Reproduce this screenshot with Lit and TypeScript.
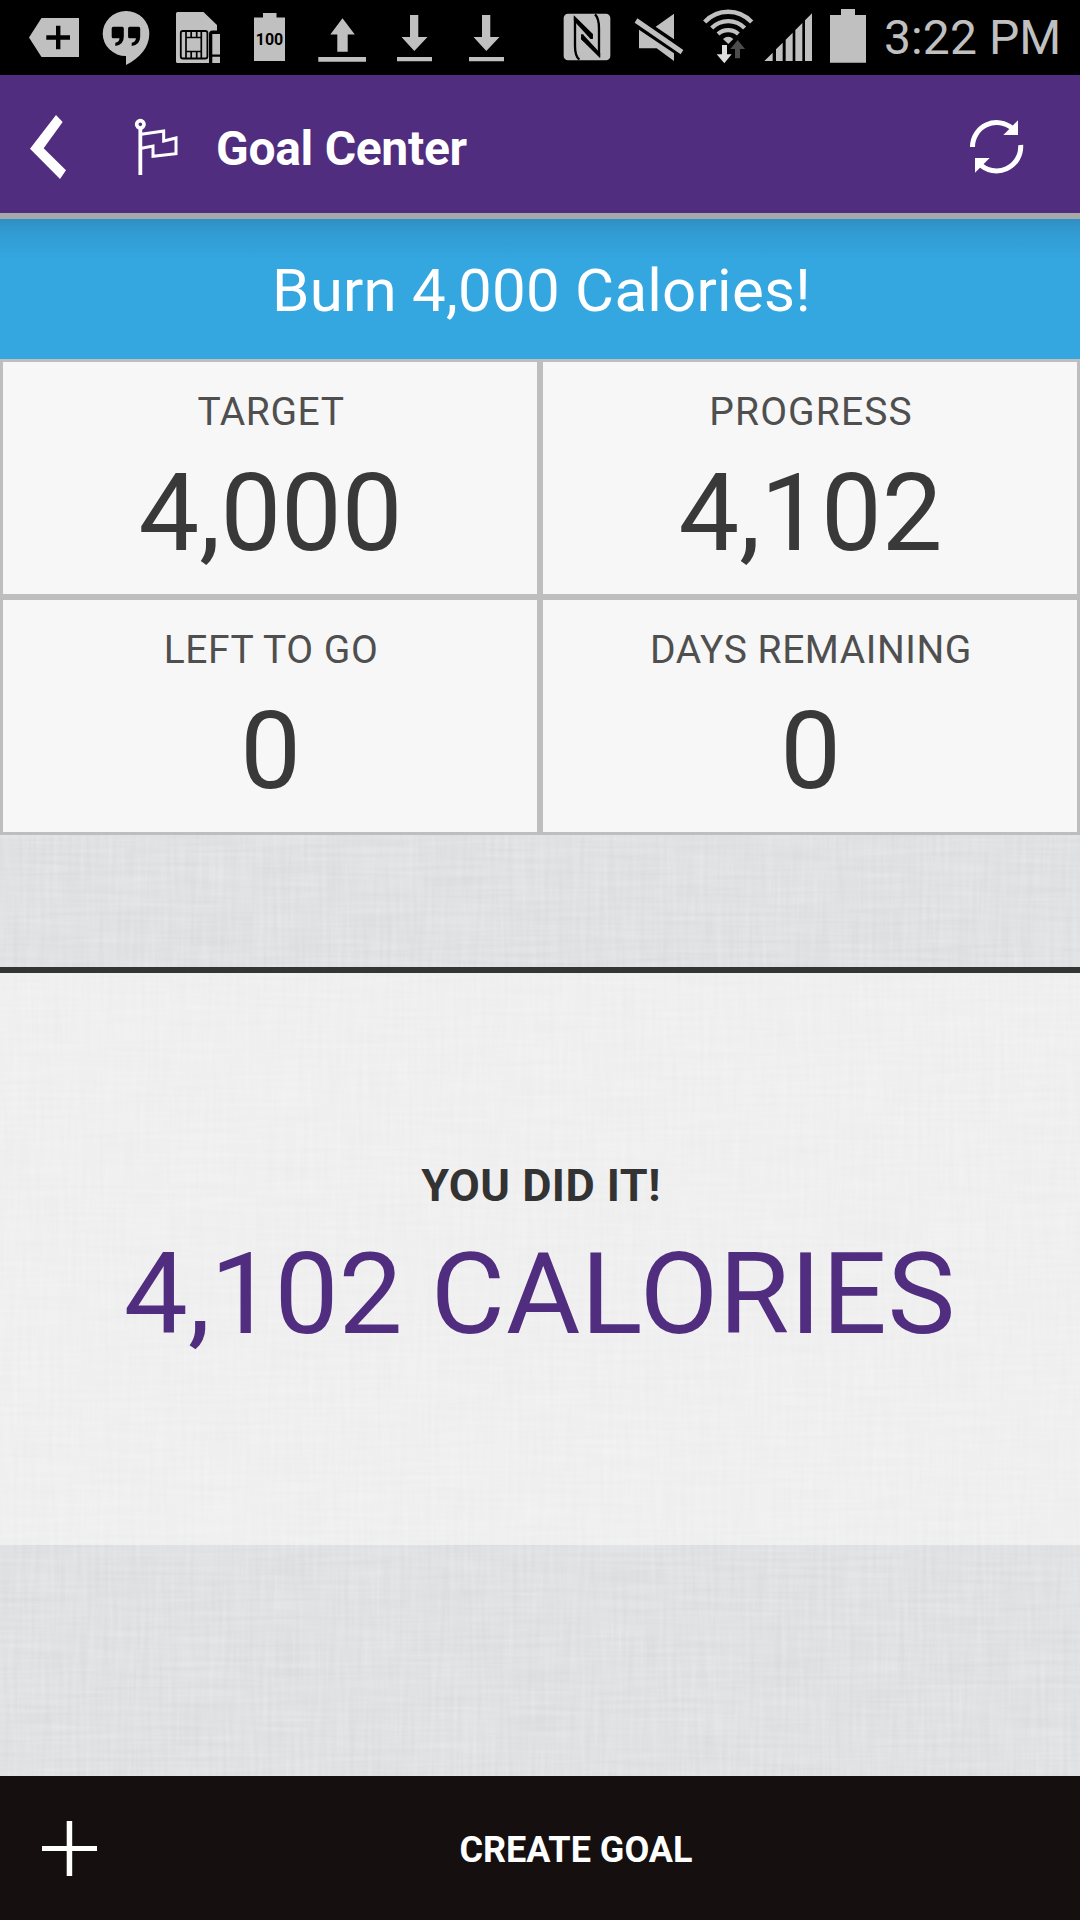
import { LitElement, html, css, svg, unsafeCSS } from "lit";
import { customElement, property } from "lit/decorators.js";
import { classMap } from "lit/directives/class-map.js";

/* Woven linen: two stretched noise fields, one per thread direction. */
const linen = encodeURIComponent(
  `<svg xmlns="http://www.w3.org/2000/svg" width="1080" height="960">
    <filter id="f" x="0" y="0" width="100%" height="100%" color-interpolation-filters="sRGB">
      <feTurbulence type="fractalNoise" baseFrequency="0.012 0.22" numOctaves="2" seed="4" result="n1"/>
      <feColorMatrix in="n1" type="matrix" values="1 0 0 0 0  1 0 0 0 0  1 0 0 0 0  0 0 0 0 1" result="h"/>
      <feTurbulence type="fractalNoise" baseFrequency="0.22 0.014" numOctaves="2" seed="9" result="n2"/>
      <feColorMatrix in="n2" type="matrix" values="1 0 0 0 0  1 0 0 0 0  1 0 0 0 0  0 0 0 0 1" result="v"/>
      <feComposite in="h" in2="v" operator="arithmetic" k1="0" k2="0.5" k3="0.5" k4="0" result="m"/>
      <feColorMatrix in="m" type="matrix" values="0.08 0 0 0 0.841  0.08 0 0 0 0.844  0.08 0 0 0 0.851  0 0 0 0 1"/>
    </filter>
    <rect width="1080" height="960" filter="url(#f)"/>
  </svg>`
);

@customElement("status-bar")
export class StatusBar extends LitElement {
  static styles = css`
    :host {
      display: flex;
      height: 75px;
      padding-left: 18px;
      background: #000;
      color: #c0c0c0;
      align-items: center;
    }
    svg {
      display: block;
      flex: none;
      height: 75px;
      fill: #c0c0c0;
    }
    .notice {
      width: 72px;
    }
    .notices {
      display: flex;
      width: 534px;
    }
    .nfc {
      width: 72px;
    }
    .mute,
    .wifi {
      width: 68px;
    }
    .signal {
      width: 60px;
    }
    .battery {
      width: 56px;
    }
    .cut {
      fill: #000;
    }
    .line {
      fill: none;
      stroke: #000;
    }
    .arc {
      fill: none;
      stroke: #c0c0c0;
      stroke-width: 13;
    }
    .dim {
      fill: #4c4c4c;
    }
    .level {
      font: 700 16px Roboto, sans-serif;
      text-anchor: middle;
      fill: #000;
    }
    .clock {
      padding-left: 8px;
      font: 400 48px/64px Roboto, sans-serif;
      letter-spacing: 0.1px;
      white-space: nowrap;
    }
  `;

  private notice(content: unknown) {
    return html`<svg class="notice" viewBox="0 0 72 75">${content}</svg>`;
  }

  render() {
    const download = svg`
      <path d="M32 15h8.3v22h9.2L36.3 51 23.5 37H32z"/>
      <path d="M19 57h35v4.2H19z"/>`;
    return html`
      <div class="notices">
        ${this.notice(svg`
          <path d="M11 37.5 23.5 18H61v39H23.5z"/>
          <path class="line" stroke-width="4.4" d="M28.3 37.5H52M40.2 25.8v23.5"/>`)}
        ${this.notice(svg`
          <path d="M36 11a23 22.5 0 0 1 23.3 23C59.3 47 50 58 36 65v-9a23 22.5 0 0 1-23.3-22.2A23.2 22.8 0 0 1 36 11z"/>
          <path class="cut" d="M23.2 26.7h9q1.6 0 1.6 1.6v8.5q0 8-8.5 9.3v-3.3q4-1 4.2-4.6h-6.3q-1.5 0-1.5-1.5v-8.4q0-1.6 1.5-1.6z"/>
          <path class="cut" d="M39.6 26.7h9q1.6 0 1.6 1.6v8.5q0 8-8.5 9.3v-3.3q4-1 4.2-4.6h-6.3q-1.5 0-1.5-1.5v-8.4q0-1.6 1.5-1.6z"/>`)}
        ${this.notice(svg`
          <path d="M15.5 12H41.5L55 25v5.5h-4.5q-3.5 0-3.5 3.5V63H15.5q-1.5 0-1.5-1.5v-48q0-1.5 1.5-1.5z"/>
          <path d="M50.3 34H58v20.5h-7.7zM50.3 56.7H58V63h-7.7z"/>
          <rect class="line" stroke-width="1.8" x="18.8" y="31" width="26.6" height="27.5" rx="2"/>
          <path class="line" stroke-width="1.7" d="M24 31v27.5M39.3 31v27.5M24 37.5h15.3M24 51.5h15.3M29.2 31v6.5M34.7 31v6.5M29.2 51.5v7M34.7 51.5v7"/>`)}
        ${this.notice(svg`
          <path d="M20 17.5h9V13h13.5v4.5H51V61H20z"/>
          <text class="level" x="35.5" y="45">100</text>`)}
        ${this.notice(svg`
          <path d="M36.5 18.2 48.8 34.6h-7.1v17.2H31.3V34.6h-7z"/>
          <path d="M12.3 57H60v4.8H12.3z"/>`)}
        ${this.notice(download)} ${this.notice(download)}
      </div>
      <svg class="nfc" viewBox="36 0 216 225">
        <rect x="71" y="41" width="140" height="140" rx="13"/>
        <path class="line" stroke-width="7" d="M118 179C107 170 105 155 105 138V57L155 105V116"/>
        <path class="line" stroke-width="7" d="M165 43C174 51 177 66 177 86V163L127 116V103"/>
        <path class="cut" d="M101.5 46v16l50 55 7-1v-14zM180.5 175v-16l-50-54-7-1v14z"/>
      </svg>
      <svg class="mute" viewBox="252 0 204 225">
        <path d="M402 41V118L347 80z"/>
        <path d="M297 89 402 160V183L350 145H297z"/>
        <path d="M292 55 430 150 422 163 284 68z"/>
      </svg>
      <svg class="wifi" viewBox="456 0 204 225">
        <path class="arc" d="M494 66A96 96 0 0 1 635 66M515 84A70 70 0 0 1 614 84M534 102A46 46 0 0 1 595 102"/>
        <path d="M549 117Q565 104 580 117L565 132z"/>
        <path class="dim" d="M593 120 615 147H600V175H585V147H571z"/>
        <path fill="#dedede" d="M546 135h15v28h14l-22 27-23-27h16z"/>
      </svg>
      <svg class="signal" viewBox="660 0 180 225">
        <path d="M673 183 698 158V183zM708 148 728 128V183H708zM737 119 758 98V183H737zM766 90 787 69V183H766zM795 61 816 40V183H795z"/>
      </svg>
      <svg class="battery" viewBox="840 0 168 225">
        <path d="M903 27H945V45H978V188H870V45H903z"/>
      </svg>
      <span class="clock">3:22 PM</span>
    `;
  }
}

@customElement("title-bar")
export class TitleBar extends LitElement {
  static styles = css`
    :host {
      display: flex;
      height: 138px;
      align-items: center;
      background: #502d7f;
      color: #fff;
      border-bottom: 6px solid #a6a9a8;
    }
    svg {
      display: block;
      flex: none;
      height: 138px;
    }
    .back {
      width: 100px;
      fill: #fff;
    }
    .flag {
      width: 116px;
      fill: none;
      stroke: #fff;
    }
    h1 {
      flex: 1;
      margin: 0;
      padding-top: 9px;
      font: 700 48px/60px Roboto, sans-serif;
      letter-spacing: -0.3px;
    }
    .refresh {
      width: 180px;
      fill: #fff;
    }
    .ring {
      fill: none;
      stroke: #fff;
      stroke-width: 15;
    }
  `;

  render() {
    return html`
      <svg class="back" viewBox="0 -15 300 414">
        <path d="M168 105 188 126 131 205 198 271 180 297 90 206z"/>
      </svg>
      <svg class="flag" viewBox="300 -15 348 414">
        <circle cx="421" cy="133" r="11" stroke-width="11"/>
        <path stroke-width="11.5" d="M421 146V285"/>
        <path stroke-width="9" d="M424 163 491 153V183L528 174V221L459 229V198L424 205"/>
      </svg>
      <h1>Goal Center</h1>
      <svg class="refresh" viewBox="0 -15 540 414">
        <path class="ring" d="M217.5 201A72.5 72.5 0 0 1 338 146M362 195A72.5 72.5 0 0 1 238 251"/>
        <path d="M354 121V165H310zM225 278V234H269z"/>
      </svg>
    `;
  }
}

@customElement("stat-cell")
export class StatCell extends LitElement {
  @property() label = "";
  @property() value = "";
  @property({ type: Boolean }) wide = false;

  static styles = css`
    :host {
      display: block;
      box-sizing: border-box;
      height: 238px;
      padding-top: 26.7px;
      border: 3px solid #bebebe;
      background: #f7f7f7;
      text-align: center;
      font-family: Roboto, sans-serif;
    }
    .label {
      padding-left: 2px;
      font-size: 39px;
      line-height: 46px;
      letter-spacing: 0.55px;
      color: #4f4f4f;
    }
    .label.wide {
      letter-spacing: 1.1px;
    }
    .value {
      margin-top: 14px;
      padding-left: 1px;
      font-size: 108px;
      line-height: 128px;
      color: #393939;
    }
  `;

  render() {
    return html`
      <div class=${classMap({ label: true, wide: this.wide })}>${this.label}</div>
      <div class="value">${this.value}</div>
    `;
  }
}

@customElement("app-root")
export class AppRoot extends LitElement {
  static styles = css`
    :host {
      display: flex;
      flex-direction: column;
      height: 1920px;
      overflow: hidden;
      font-family: Roboto, sans-serif;
      background: #e0e1e3 url("data:image/svg+xml,${unsafeCSS(linen)}") 0 835px / 1080px 960px no-repeat;
    }
    .banner {
      box-sizing: border-box;
      height: 140px;
      padding: 36px 0 0 3px;
      background: linear-gradient(#2f90c4, #329ed5 18px, #34a6e0 40px, #34a6e0);
      color: #fff;
      font-size: 60px;
      line-height: 71px;
      letter-spacing: 0.24px;
      text-align: center;
    }
    .stats {
      display: grid;
      grid-template-columns: 1fr 1fr;
    }
    .result {
      box-sizing: border-box;
      height: 578px;
      margin-top: 132px;
      padding-top: 185.5px;
      border-top: 6px solid #333534;
      background: rgba(255, 254, 253, 0.5);
      background-clip: padding-box;
      text-align: center;
    }
    .cheer {
      padding-left: 2px;
      font-size: 45px;
      font-weight: 700;
      line-height: 54px;
      letter-spacing: 0.47px;
      color: #333333;
    }
    .total {
      margin-top: 14.5px;
      font-size: 114px;
      line-height: 134px;
      color: #502d7f;
    }
    .unit {
      letter-spacing: 0.85px;
    }
    .create {
      display: flex;
      align-items: center;
      box-sizing: border-box;
      height: 144px;
      margin-top: auto;
      background: #150f10;
      color: #fff;
    }
    .plus {
      flex: none;
      width: 138px;
      height: 144px;
      fill: #fff;
    }
    .action {
      flex: 1;
      padding: 3px 66px 0 0;
      font-size: 36px;
      font-weight: 700;
      line-height: 44px;
      text-align: center;
    }
  `;

  render() {
    return html`
      <status-bar></status-bar>
      <title-bar></title-bar>
      <div class="banner">Burn 4,000 Calories!</div>
      <div class="stats">
        <stat-cell label="TARGET" value="4,000"></stat-cell>
        <stat-cell label="PROGRESS" value="4,102" wide></stat-cell>
        <stat-cell label="LEFT TO GO" value="0"></stat-cell>
        <stat-cell label="DAYS REMAINING" value="0"></stat-cell>
      </div>
      <div class="result">
        <div class="cheer">YOU DID IT!</div>
        <div class="total">4,102 <span class="unit">CALORIES</span></div>
      </div>
      <div class="create">
        <svg class="plus" viewBox="0 0 138 144">
          <path d="M66.7 45H72.2V70H97V75H72.2V100H66.7V75H42V70H66.7z"/>
        </svg>
        <div class="action">CREATE GOAL</div>
      </div>
    `;
  }
}
